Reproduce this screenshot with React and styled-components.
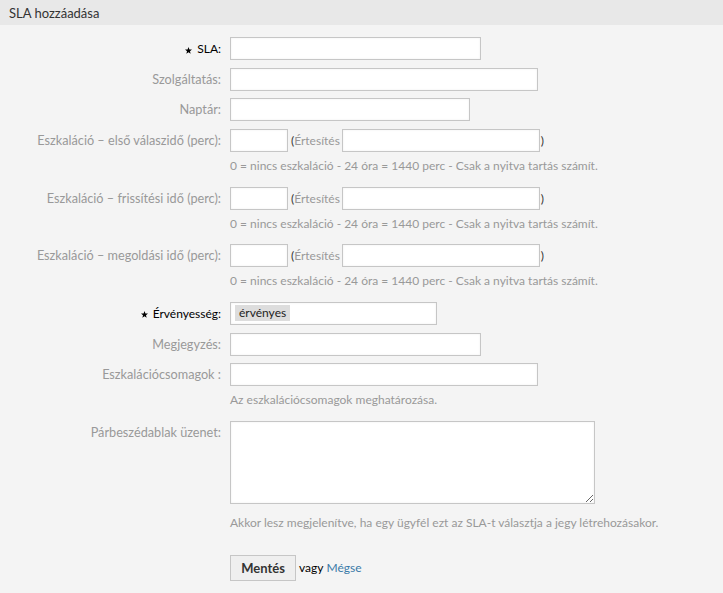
import React from 'react';
import styled, { createGlobalStyle } from 'styled-components';

const GlobalStyle = createGlobalStyle`
  html, body {
    margin: 0;
    padding: 0;
    background: #f4f4f4;
  }
  body {
    font-family: Lato, "Liberation Sans", sans-serif;
    font-size: 12px;
    color: #333;
  }
`

const Panel = styled.div`
  width: 723px;
  min-height: 593px;
  background: #f4f4f4;
`

const Header = styled.div`
  height: 25px;
  background: #e8e8e8;
  padding: 0 9px;
  display: flex;
  align-items: center;
  font-size: 13px;
  color: #333;
`

const Form = styled.div`
  padding-top: 12px;
  display: flex;
  flex-direction: column;
  gap: 7.67px;
`

const Row = styled.div`
  display: flex;
  align-items: flex-start;
`

const Label = styled.label`
  width: 221px;
  flex: none;
  margin-right: 9px;
  text-align: right;
  line-height: 23px;
  color: ${props => (props.required ? '#000' : '#999')};
  font-size: ${props => (props.required ? '12px' : '12.7px')};
  display: flex;
  justify-content: flex-end;
  align-items: center;
  gap: 5px;
  white-space: nowrap;

  svg {
    margin-top: 3px;
  }
`

const Field = styled.div`
  display: flex;
  flex-direction: column;
  align-items: flex-start;
`

const Input = styled.input`
  box-sizing: border-box;
  width: ${props => props.w}px;
  height: 23px;
  border: 1px solid #c6c6c6;
  background: #fff;
  box-shadow: inset 0 0 2px rgba(0, 0, 0, 0.08);
  padding: 2px 4px;
  margin: 0;
  font: inherit;
  outline: none;
`

const TextArea = styled.textarea`
  box-sizing: border-box;
  width: 365px;
  height: 83px;
  border: 1px solid #c6c6c6;
  background: #fff;
  box-shadow: inset 0 0 2px rgba(0, 0, 0, 0.08);
  margin: 0 0 5px;
  font: inherit;
  outline: none;
  display: block;
`

const Hint = styled.div`
  margin: 6px 0 5px;
  line-height: 16px;
  color: #999;
  font-size: 12px;
  white-space: nowrap;
`

const Inline = styled.div`
  display: flex;
  align-items: center;
  height: 23px;
`

const Paren = styled.span`
  color: #333;
  margin: ${props => (props.close ? '0 0 0 1px' : '0 0 0 3px')};
`

const Notify = styled.span`
  color: #999;
  margin-right: 2px;
`

const Select = styled.div`
  box-sizing: border-box;
  width: 207px;
  height: 23px;
  border: 1px solid #c6c6c6;
  background: #fff;
  box-shadow: inset 0 0 2px rgba(0, 0, 0, 0.08);
  display: flex;
  align-items: center;
  padding: 0 4px;
`

const Tag = styled.span`
  background: #ddd;
  color: #222;
  padding: 0 4px 1px;
  line-height: 15px;
  font-size: 12px;
`

const Actions = styled.div`
  display: flex;
  align-items: center;
  margin-top: 19px;
  padding-left: 230px;
  gap: 3px;
`

const Button = styled.button`
  box-sizing: border-box;
  height: 26px;
  width: 66px;
  border: 1px solid #c6c6c6;
  background: #efefef;
  font: inherit;
  font-weight: bold;
  font-size: 13px;
  color: #333;
  padding: 0;
  cursor: pointer;
`

const Or = styled.span`
  color: #000;
`

const Link = styled.a`
  color: #3a7aa8;
  text-decoration: none;
`

const Star = () => (
  <svg width="7" height="7" viewBox="0 0 10 10">
    <polygon fill="#000" points="5,0 6.3,3.4 10,3.6 7.1,5.9 8.1,9.5 5,7.5 1.9,9.5 2.9,5.9 0,3.6 3.7,3.4" />
  </svg>
)

const hint = '0 = nincs eszkaláció - 24 óra = 1440 perc - Csak a nyitva tartás számít.'

const EscalationRow = ({ label }) => (
  <Row>
    <Label>{label}</Label>
    <Field>
      <Inline>
        <Input w={58} />
        <Paren>(</Paren>
        <Notify>Értesítés</Notify>
        <Input w={198} />
        <Paren close>)</Paren>
      </Inline>
      <Hint>{hint}</Hint>
    </Field>
  </Row>
)

export default function App() {
  return (
    <Panel>
      <GlobalStyle />
      <Header>SLA hozzáadása</Header>
      <Form>
        <Row>
          <Label required><Star />SLA:</Label>
          <Input w={251} />
        </Row>
        <Row>
          <Label>Szolgáltatás:</Label>
          <Input w={308} />
        </Row>
        <Row>
          <Label>Naptár:</Label>
          <Input w={240} />
        </Row>
        <EscalationRow label="Eszkaláció – első válaszidő (perc):" />
        <EscalationRow label="Eszkaláció – frissítési idő (perc):" />
        <EscalationRow label="Eszkaláció – megoldási idő (perc):" />
        <Row>
          <Label required><Star />Érvényesség:</Label>
          <Select><Tag>érvényes</Tag></Select>
        </Row>
        <Row>
          <Label>Megjegyzés:</Label>
          <Input w={251} />
        </Row>
        <Row>
          <Label>Eszkalációcsomagok :</Label>
          <Field>
            <Input w={308} />
            <Hint>Az eszkalációcsomagok meghatározása.</Hint>
          </Field>
        </Row>
        <Row>
          <Label>Párbeszédablak üzenet:</Label>
          <Field>
            <TextArea />
            <Hint>Akkor lesz megjelenítve, ha egy ügyfél ezt az SLA-t választja a jegy létrehozásakor.</Hint>
          </Field>
        </Row>
      </Form>
      <Actions>
        <Button>Mentés</Button>
        <Or>vagy</Or>
        <Link href="#">Mégse</Link>
      </Actions>
    </Panel>
  )
}
